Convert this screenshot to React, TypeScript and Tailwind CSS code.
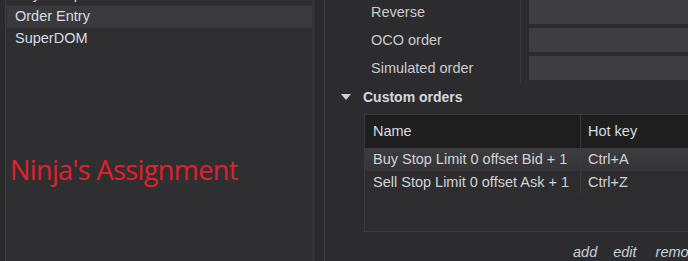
const leftItems = [
  { label: "Key Setup", active: false },
  { label: "Order Entry", active: true },
  { label: "SuperDOM", active: false },
];

const props = ["Reverse", "OCO order", "Simulated order"];

const orders = [
  { name: "Buy Stop Limit 0 offset Bid + 1", key: "Ctrl+A" },
  { name: "Sell Stop Limit 0 offset Ask + 1", key: "Ctrl+Z" },
];

export default function App() {
  return (
    <div
      className="flex h-[261px] w-[688px] overflow-hidden bg-[#2b2b2d] text-[14.5px] text-[#d2d2d4]"
      style={{ fontFamily: '"Liberation Sans", Arial, sans-serif' }}
    >
      {/* left list */}
      <div className="ml-[5px] flex w-[309px] shrink-0 flex-col border-x border-[#3e3e41] bg-[#2f2f31]">
        <div className="-mt-[16px] flex flex-col px-px">
          {leftItems.map((it) => (
            <div
              key={it.label}
              className={`flex h-[22px] items-center pl-[8px] text-[#d6dce6] ${it.active ? "bg-[#3a3a3c]" : ""}`}
            >
              {it.label}
            </div>
          ))}
        </div>
        <div
          className="mt-[106px] pl-[4px] text-[27px] leading-none tracking-[-0.6px] text-[#e2202b]"
          style={{ fontFamily: '"Open Sans", sans-serif' }}
        >
          Ninja's Assignment
        </div>
      </div>

      {/* right settings */}
      <div className="ml-[10px] flex min-w-0 flex-1 flex-col border-l border-[#3e3e41] bg-[#2c2c2e]">
        <div className="flex">
          <div className="flex w-[196px] shrink-0 flex-col gap-[4px] border-r border-[#3a3a3d] pb-[3px] pl-[46px]">
            {props.map((p) => (
              <div key={p} className="flex h-[24px] items-center pt-px text-[#cbcbcd]">
                {p}
              </div>
            ))}
          </div>
          <div className="ml-[8px] flex flex-1 flex-col gap-[4px]">
            {props.map((p) => (
              <div key={p} className="h-[24px] bg-[#3d3d42]" />
            ))}
          </div>
        </div>

        <div className="mt-[6px] flex h-[16px] items-center">
          <svg width="10" height="6" viewBox="0 0 10 6" className="ml-[16px]">
            <path d="M0 0 L10 0 L5 6 Z" fill="#d0d0d0" />
          </svg>
          <span className="ml-[12px] text-[14px] font-bold text-[#d4d8de]">Custom orders</span>
        </div>

        <div className="ml-[39px] mt-[9px] flex h-[125px] w-[400px] flex-col border border-[#3a3a3d] bg-[#2d2d2f]">
          <div className="flex h-[33px] bg-[#1e1e1f]">
            <div className="flex w-[216px] items-center border-r border-[#3a3a3d] pl-[8px] text-[#d8dce2]">Name</div>
            <div className="flex items-center pl-[7px] text-[#d8dce2]">Hot key</div>
          </div>
          {orders.map((o, i) => (
            <div
              key={o.name}
              className={`flex h-[23px] ${i === 0 ? "bg-gradient-to-b from-[#3c3c3e] to-[#353537]" : ""}`}
            >
              <div className="flex w-[216px] items-center border-r border-[#3a3a3d] pl-[8px] text-[#d2d2d4]">
                {o.name}
              </div>
              <div className="flex items-center pl-[7px] text-[#d2d2d4]">{o.key}</div>
            </div>
          ))}
        </div>

        <div className="mt-[11px] flex gap-[16px] pl-[248px] italic leading-[18px] text-[#c8d0dc]">
          <span>add</span>
          <span>edit</span>
          <span className="ml-[3px]">remove</span>
        </div>
      </div>
    </div>
  );
}
